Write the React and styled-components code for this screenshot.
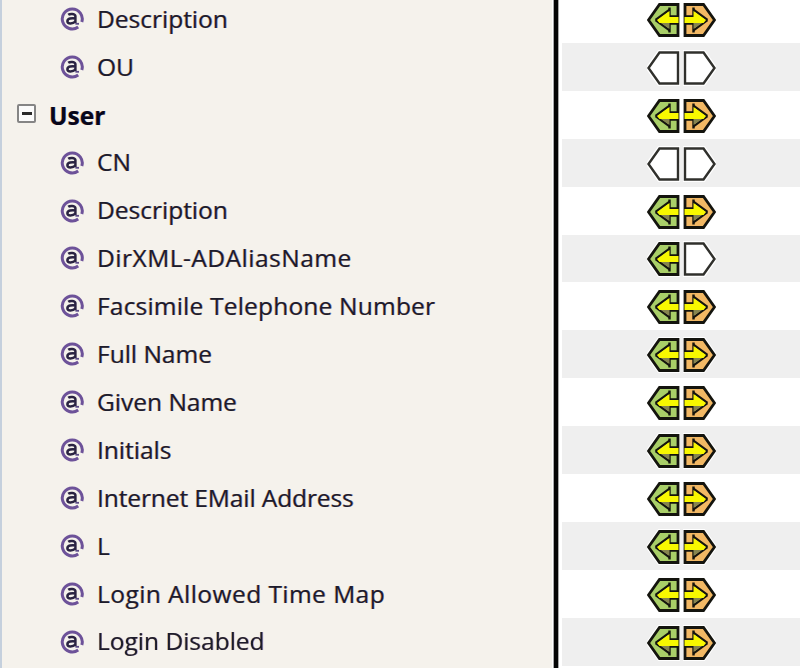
import React from 'react';
import styled, { createGlobalStyle } from 'styled-components';

const Global = createGlobalStyle`
  html, body { margin: 0; padding: 0; background: #fff; }
  body { width: 800px; height: 668px; overflow: hidden; font-family: "Open Sans", "Noto Sans", sans-serif; }
`;

const Frame = styled.div`
  display: flex;
  width: 800px;
  height: 668px;
  overflow: hidden;
  filter: blur(0.55px);
`;
const TreePane = styled.div`
  width: 550px;
  flex: none;
  background: #f5f2ec;
  border-left: 2px solid #c5d0dd;
  margin-right: 2px;
`;
const Divider = styled.div`
  width: 4px;
  flex: none;
  background: #050505;
  box-shadow: 0 0 0 1px #a8a8a8;
`;
const StatePane = styled.div`
  flex: 1;
  padding-left: 4px;
`;
const List = styled.div`
  margin-top: -5px;
  display: flex;
  flex-direction: column;
`;
const TreeRow = styled.div`
  height: 47.92px;
  display: flex;
  align-items: center;
  padding-left: ${p => (p.$group ? 15 : 58)}px;
  gap: 13px;
`;
const Label = styled.span`
  font-size: 24.5px;
  font-weight: ${p => (p.$group ? 700 : 400)};
  color: ${p => (p.$group ? '#07071a' : '#1c1c2c')};
  line-height: 1;
  white-space: nowrap;
  margin-top: ${p => (p.$group ? 2 : 0)}px;
  letter-spacing: ${p => p.$track || 0}px;
  text-shadow: -0.6px 0 rgba(190, 120, 30, 0.45), 0.6px 0 rgba(60, 50, 170, 0.45);
`;
const StateRow = styled.div`
  height: 47.92px;
  display: flex;
  align-items: center;
  padding: 2px 0 0 85px;
  box-sizing: border-box;
  gap: 3px;
  background: ${p => (p.$stripe ? '#efefef' : '#fff')};
`;
const Expander = styled.span`
  width: 15px;
  height: 15px;
  flex: none;
  margin-top: -2px;
  border: 2px solid #858585;
  border-radius: 2px;
  background: #fbfbfb;
  display: flex;
  align-items: center;
  justify-content: center;
  &::before {
    content: "";
    width: 10px;
    height: 3px;
    background: #2a2a2a;
  }
`;
const IconSvg = styled.svg`
  flex: none;
`;

const AttrIcon = () => (
  <IconSvg width="24" height="24" viewBox="0 0 24 24">
    <path d="M18.2 20A10 10 0 1 1 21.8 15" fill="none" stroke="#6d5299" strokeWidth="3" />
    <path d="M8.2 7.8c1.6-1.2 6.6-1.6 7.2 1.2v7.2M15.4 11.4c-3.4-.4-8-.2-8 2.8 0 3 5.4 2.8 8 .4" fill="none" stroke="#2a2342" strokeWidth="2.5" />
    <path d="M15.4 16.8h3.6" stroke="#5d4d88" strokeWidth="1.8" />
  </IconSvg>
);

const OUTLINE = 'M31 2.5H12.5L1.5 18l11 15.5H31z';

const ArrowShell = ({ on, flip }) => {
  const t = flip ? 'translate(33 0) scale(-1 1)' : undefined;
  const fill = flip ? '#f2b864' : '#a9cf68';
  return (
    <IconSvg width="33" height="36" viewBox="0 0 33 36">
      <g transform={t}>
        <path d={OUTLINE} fill="none" stroke="#fff" strokeWidth="5" />
        <path d={OUTLINE} fill={on ? fill : '#fff'} stroke={on ? '#14140e' : '#30302c'} strokeWidth={on ? 2.8 : 2.4} />
        {on && (
          <>
            <path d="M22.5 5.5v9h8.5M22.5 30.5v-9h8.5" fill="none" stroke="#14140e" strokeWidth="2.4" />
            <path d="M8.5 18l14-10.4M8.5 18l14 10.4" stroke="#14140e" strokeWidth="2.2" />
            <path d="M11 19h11.5v8z" fill="#85844f" />
            <path d="M10 18l12.5-9v6h9v6H12.5z" fill="#f8f800" />
          </>
        )}
      </g>
    </IconSvg>
  );
};

const rows = [
  { label: 'Description', l: 1, r: 1 },
  { label: 'OU', l: 0, r: 0 },
  { label: 'User', group: true, l: 1, r: 1 },
  { label: 'CN', l: 0, r: 0 },
  { label: 'Description', l: 1, r: 1 },
  { label: 'DirXML-ADAliasName', l: 1, r: 0, track: 0.5 },
  { label: 'Facsimile Telephone Number', l: 1, r: 1, track: 0.2 },
  { label: 'Full Name', l: 1, r: 1 },
  { label: 'Given Name', l: 1, r: 1 },
  { label: 'Initials', l: 1, r: 1 },
  { label: 'Internet EMail Address', l: 1, r: 1, track: -0.1 },
  { label: 'L', l: 1, r: 1 },
  { label: 'Login Allowed Time Map', l: 1, r: 1, track: 0.45 },
  { label: 'Login Disabled', l: 1, r: 1 },
];

export default function App() {
  return (
    <>
      <Global />
      <Frame>
        <TreePane>
          <List>
            {rows.map((r, i) => (
              <TreeRow key={i} $group={r.group}>
                {r.group ? <Expander /> : <AttrIcon />}
                <Label $group={r.group} $track={r.track}>{r.label}</Label>
              </TreeRow>
            ))}
          </List>
        </TreePane>
        <Divider />
        <StatePane>
          <List>
            {rows.map((r, i) => (
              <StateRow key={i} $stripe={i % 2 === 1}>
                <ArrowShell on={!!r.l} />
                <ArrowShell on={!!r.r} flip />
              </StateRow>
            ))}
          </List>
        </StatePane>
      </Frame>
    </>
  );
}
